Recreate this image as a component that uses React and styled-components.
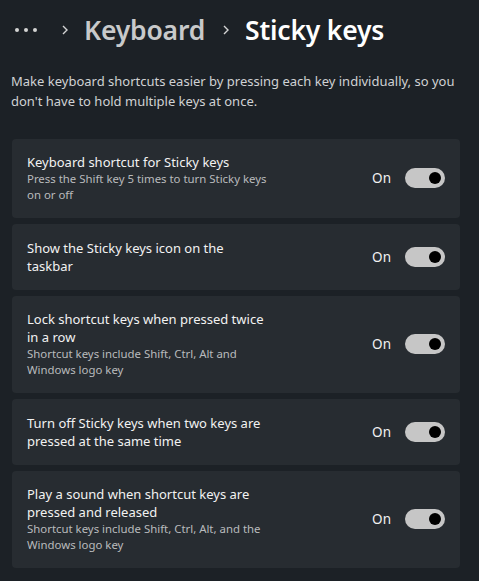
import React from "react";
import styled, { createGlobalStyle } from "styled-components";

const GlobalStyle = createGlobalStyle`
  html, body {
    margin: 0;
    padding: 0;
    background-color: #1c2126;
  }
  body {
    font-family: "Noto Sans", "Open Sans", sans-serif;
    color: #ffffff;
  }
`;

const Page = styled.div`
  width: 479px;
  height: 581px;
  padding: 0 19px 0 12px;
  box-sizing: border-box;
  overflow: hidden;
  background-color: #1c2126;
`;

const Breadcrumb = styled.div`
  display: flex;
  align-items: center;
  height: 60px;
  padding-left: 3px;
`;

const Dots = styled.span`
  display: flex;
  gap: 5px;
  margin-right: 24px;

  > i {
    width: 4px;
    height: 4px;
    border-radius: 50%;
    background-color: #d4d4d4;
  }
`;

const Chevron = styled.svg`
  width: 8px;
  height: 10px;
  margin-right: 15px;
  margin-left: ${(p) => p.$ml || 0}px;
`;

const Crumb = styled.span`
  font-size: 26.5px;
  font-weight: 600;
  letter-spacing: -0.2px;
  color: ${(p) => (p.$current ? "#ffffff" : "#c8c9ca")};
`;

const Description = styled.p`
  margin: 11px 0 0 -1px;
  font-size: 13px;
  line-height: 20px;
  color: #d0d2d4;
`;

const List = styled.div`
  display: flex;
  flex-direction: column;
  gap: 6px;
  margin-top: 28px;
`;

const Card = styled.div`
  display: flex;
  align-items: center;
  justify-content: space-between;
  background-color: #272c31;
  border-radius: 4px;
  padding: 14px 15px 15px;
  min-height: 37px;
`;

const TextCol = styled.div`
  max-width: 242px;
`;

const Title = styled.div`
  font-size: 13px;
  line-height: 18px;
  color: #f2f2f2;
`;

const Subtitle = styled.div`
  font-size: 11.4px;
  line-height: 16px;
  color: #b9bbbd;
`;

const Control = styled.div`
  display: flex;
  align-items: center;
  gap: 14px;
`;

const State = styled.span`
  font-size: 13.5px;
  color: #f2f2f2;
`;

const Toggle = styled.div`
  width: 40px;
  height: 20px;
  border-radius: 10px;
  background-color: #c6c6c6;
  display: flex;
  align-items: center;
  justify-content: flex-end;
  padding-right: 4px;
  box-sizing: border-box;

  > i {
    width: 12px;
    height: 12px;
    border-radius: 50%;
    background-color: #000000;
  }
`;

const settings = [
  {
    title: "Keyboard shortcut for Sticky keys",
    sub: "Press the Shift key 5 times to turn Sticky keys on or off",
  },
  { title: "Show the Sticky keys icon on the taskbar" },
  {
    title: "Lock shortcut keys when pressed twice in a row",
    sub: "Shortcut keys include Shift, Ctrl, Alt and Windows logo key",
  },
  { title: "Turn off Sticky keys when two keys are pressed at the same time" },
  {
    title: "Play a sound when shortcut keys are pressed and released",
    sub: "Shortcut keys include Shift, Ctrl, Alt, and the Windows logo key",
  },
];

const ChevronIcon = ({ ml }) => (
  <Chevron $ml={ml} viewBox="0 0 8 10">
    <path d="M2 1l4 4-4 4" fill="none" stroke="#d4d4d4" strokeWidth="1.4" />
  </Chevron>
);

const App = () => {
  return (
    <Page>
      <GlobalStyle />
      <Breadcrumb>
        <Dots>
          <i />
          <i />
          <i />
        </Dots>
        <ChevronIcon />
        <Crumb>Keyboard</Crumb>
        <ChevronIcon ml={17} />
        <Crumb $current>Sticky keys</Crumb>
      </Breadcrumb>
      <Description>
        Make keyboard shortcuts easier by pressing each key individually, so you
        don't have to hold multiple keys at once.
      </Description>
      <List>
        {settings.map((s) => (
          <Card key={s.title}>
            <TextCol>
              <Title>{s.title}</Title>
              {s.sub && <Subtitle>{s.sub}</Subtitle>}
            </TextCol>
            <Control>
              <State>On</State>
              <Toggle>
                <i />
              </Toggle>
            </Control>
          </Card>
        ))}
      </List>
    </Page>
  );
};

export default App;
